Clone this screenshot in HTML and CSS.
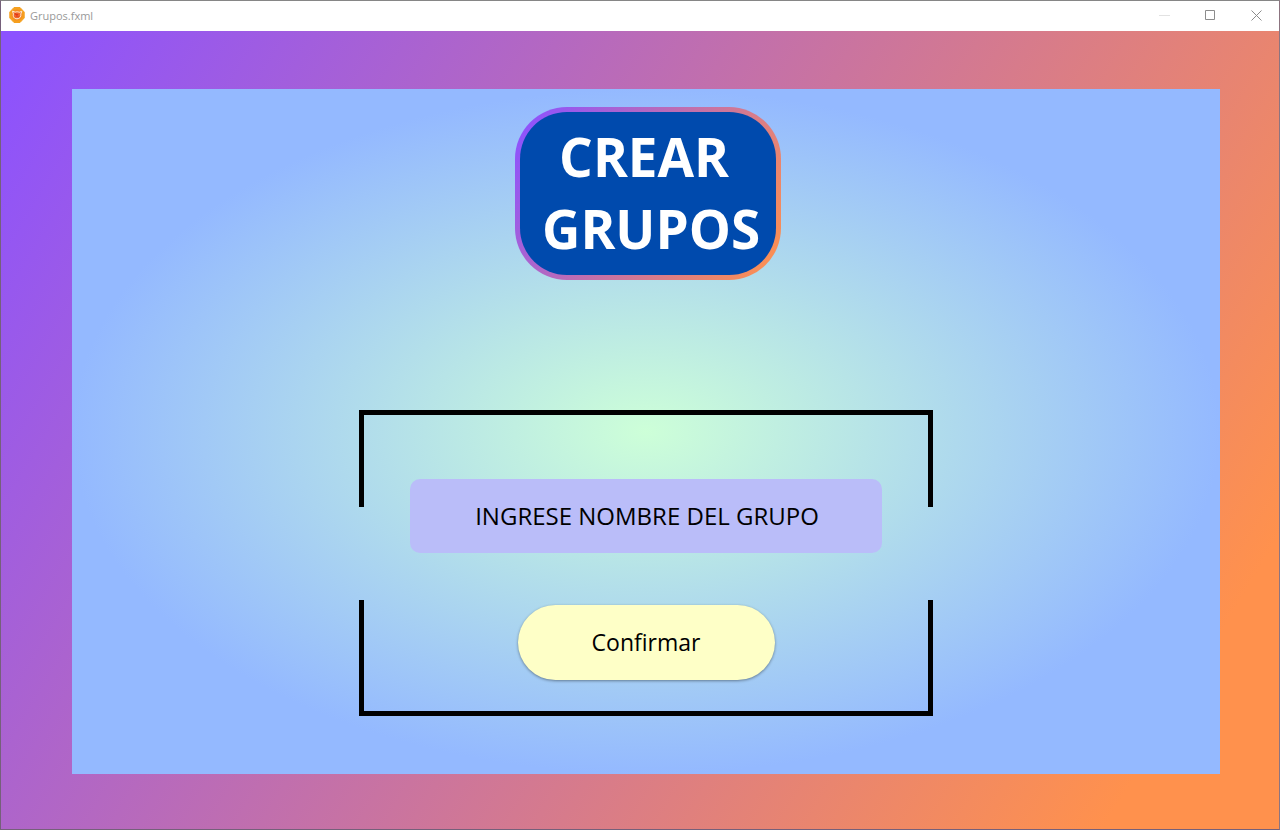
FILE: index.html
```html
<!DOCTYPE html>
<html lang="es">
<head>
<meta charset="utf-8">
<title>Grupos.fxml</title>
<link rel="stylesheet" href="styles.css">
</head>
<body>
<div class="window">
  <header class="titlebar">
    <svg class="app-icon" viewBox="0 0 16 16" aria-hidden="true">
      <path d="M5 .5h6l4.200 4.500v6L11 15.500H5L.8 11V5z" fill="#f5a01f" stroke="#f5a01f" stroke-linejoin="round"/>
      <circle cx="8" cy="8" r="5.500" fill="#f58a22"/>
      <path d="M3.500 4.200l2.700 1c1.300-.6 2.800-.5 4 .1l2.600-1-1 2.700c.7 2.700-1.200 4.800-3.800 4.800-2.700 0-4.400-2.200-3.600-4.700z" fill="#f0682a" stroke="#fdeeda" stroke-width="1"/>
      <path d="M6 6.500l3.500 3M9 7L7 9.500" fill="none" stroke="#e0301e" stroke-width="1.200"/>
    </svg>
    <span class="caption">Grupos.fxml</span>
    <button class="control" type="button" aria-label="Minimizar" disabled>
      <svg viewBox="0 0 11 11"><path d="M0 5.500h11"/></svg>
    </button>
    <button class="control" type="button" aria-label="Maximizar">
      <svg viewBox="0 0 11 11"><path d="M.5.500h9v9H.5z"/></svg>
    </button>
    <button class="control" type="button" aria-label="Cerrar">
      <svg viewBox="0 0 11 11"><path d="M.5.500l10 10M10.500.500l-10 10"/></svg>
    </button>
  </header>
  <main class="stage">
    <section class="panel">
      <h1 class="badge"><span class="badge-text">CREAR 
GRUPOS</span></h1>
      <form class="frame">
        <input class="name" type="text" aria-label="Nombre del grupo" placeholder="INGRESE NOMBRE DEL GRUPO">
        <button class="confirm" type="button">Confirmar</button>
      </form>
    </section>
  </main>
</div>
</body>
</html>
```
FILE: styles.css
```css
* { box-sizing: border-box; }

body {
  margin: 0;
  font-family: "Open Sans", "Noto Sans", sans-serif;
}

.window {
  min-height: 100vh;
  display: flex;
  flex-direction: column;
  border: 1px solid;
  border-color: #868686 #8c7480 #75607a #75607a;
}

.titlebar {
  height: 30px;
  display: flex;
  align-items: center;
  padding: 0 0 2px 8px;
  background: #fff;
}

.app-icon { width: 16px; height: 16px; }

.caption {
  flex: 1;
  margin-left: 5px;
  font-size: 11px;
  color: #999;
}

.control {
  width: 46px;
  height: 28px;
  padding: 0;
  border: 0;
  display: grid;
  place-items: center;
  background: none;
  color: #8c8c8c;
}

.control:disabled { color: #e2e2e2; }

.control svg {
  width: 11px;
  height: 11px;
  fill: none;
  stroke: currentColor;
}

.stage {
  flex: 1;
  display: flex;
  padding: 58px 59px 55px 71px;
  background: linear-gradient(121deg, #8c52ff 1%, #ff914d 90%);
}

.panel {
  flex: 1;
  display: flex;
  flex-direction: column;
  align-items: center;
  justify-content: space-between;
  padding: 18px 0 58px;
  background: radial-gradient(closest-side, #cdffd8, #94b9ff);
}

.badge {
  margin: 0 0 0 4px;
  padding: 9px 16px 10px 22px;
  width: 266px;
  border: 5px solid transparent;
  border-radius: 52px;
  background:
    linear-gradient(#004aad, #004aad) padding-box,
    linear-gradient(121deg, #8c52ff 4%, #ff914d 98%) border-box;
  color: #fff;
  font-size: 53px;
  line-height: 72px;
  text-align: center;
}

.badge-text { display: block; white-space: pre; }

.frame {
  width: 574px;
  display: flex;
  flex-direction: column;
  align-items: center;
  gap: 52px;
  padding: 64px 0 31px;
  border: solid #000;
  border-width: 5px 0;
  background:
    linear-gradient(#000 92px, transparent 92px calc(100% - 111px), #000 calc(100% - 111px)) left / 5px 100% no-repeat,
    linear-gradient(#000 92px, transparent 92px calc(100% - 111px), #000 calc(100% - 111px)) right / 5px 100% no-repeat;
}

.name,
.confirm {
  border: 0;
  color: #000;
  font-family: inherit;
  text-align: center;
}

.name {
  width: 472px;
  height: 74px;
  padding: 0 0 2px 2px;
  border-radius: 10px;
  background: #babdf9;
  font-size: 24px;
}

.name::placeholder { color: #000; opacity: 1; }

.confirm {
  width: 257px;
  height: 75px;
  padding: 0 0 2px;
  border-radius: 38px;
  background: #feffc7;
  box-shadow: 0 1px 3px rgba(0, 0, 0, 0.4);
  font-size: 23px;
}
```
